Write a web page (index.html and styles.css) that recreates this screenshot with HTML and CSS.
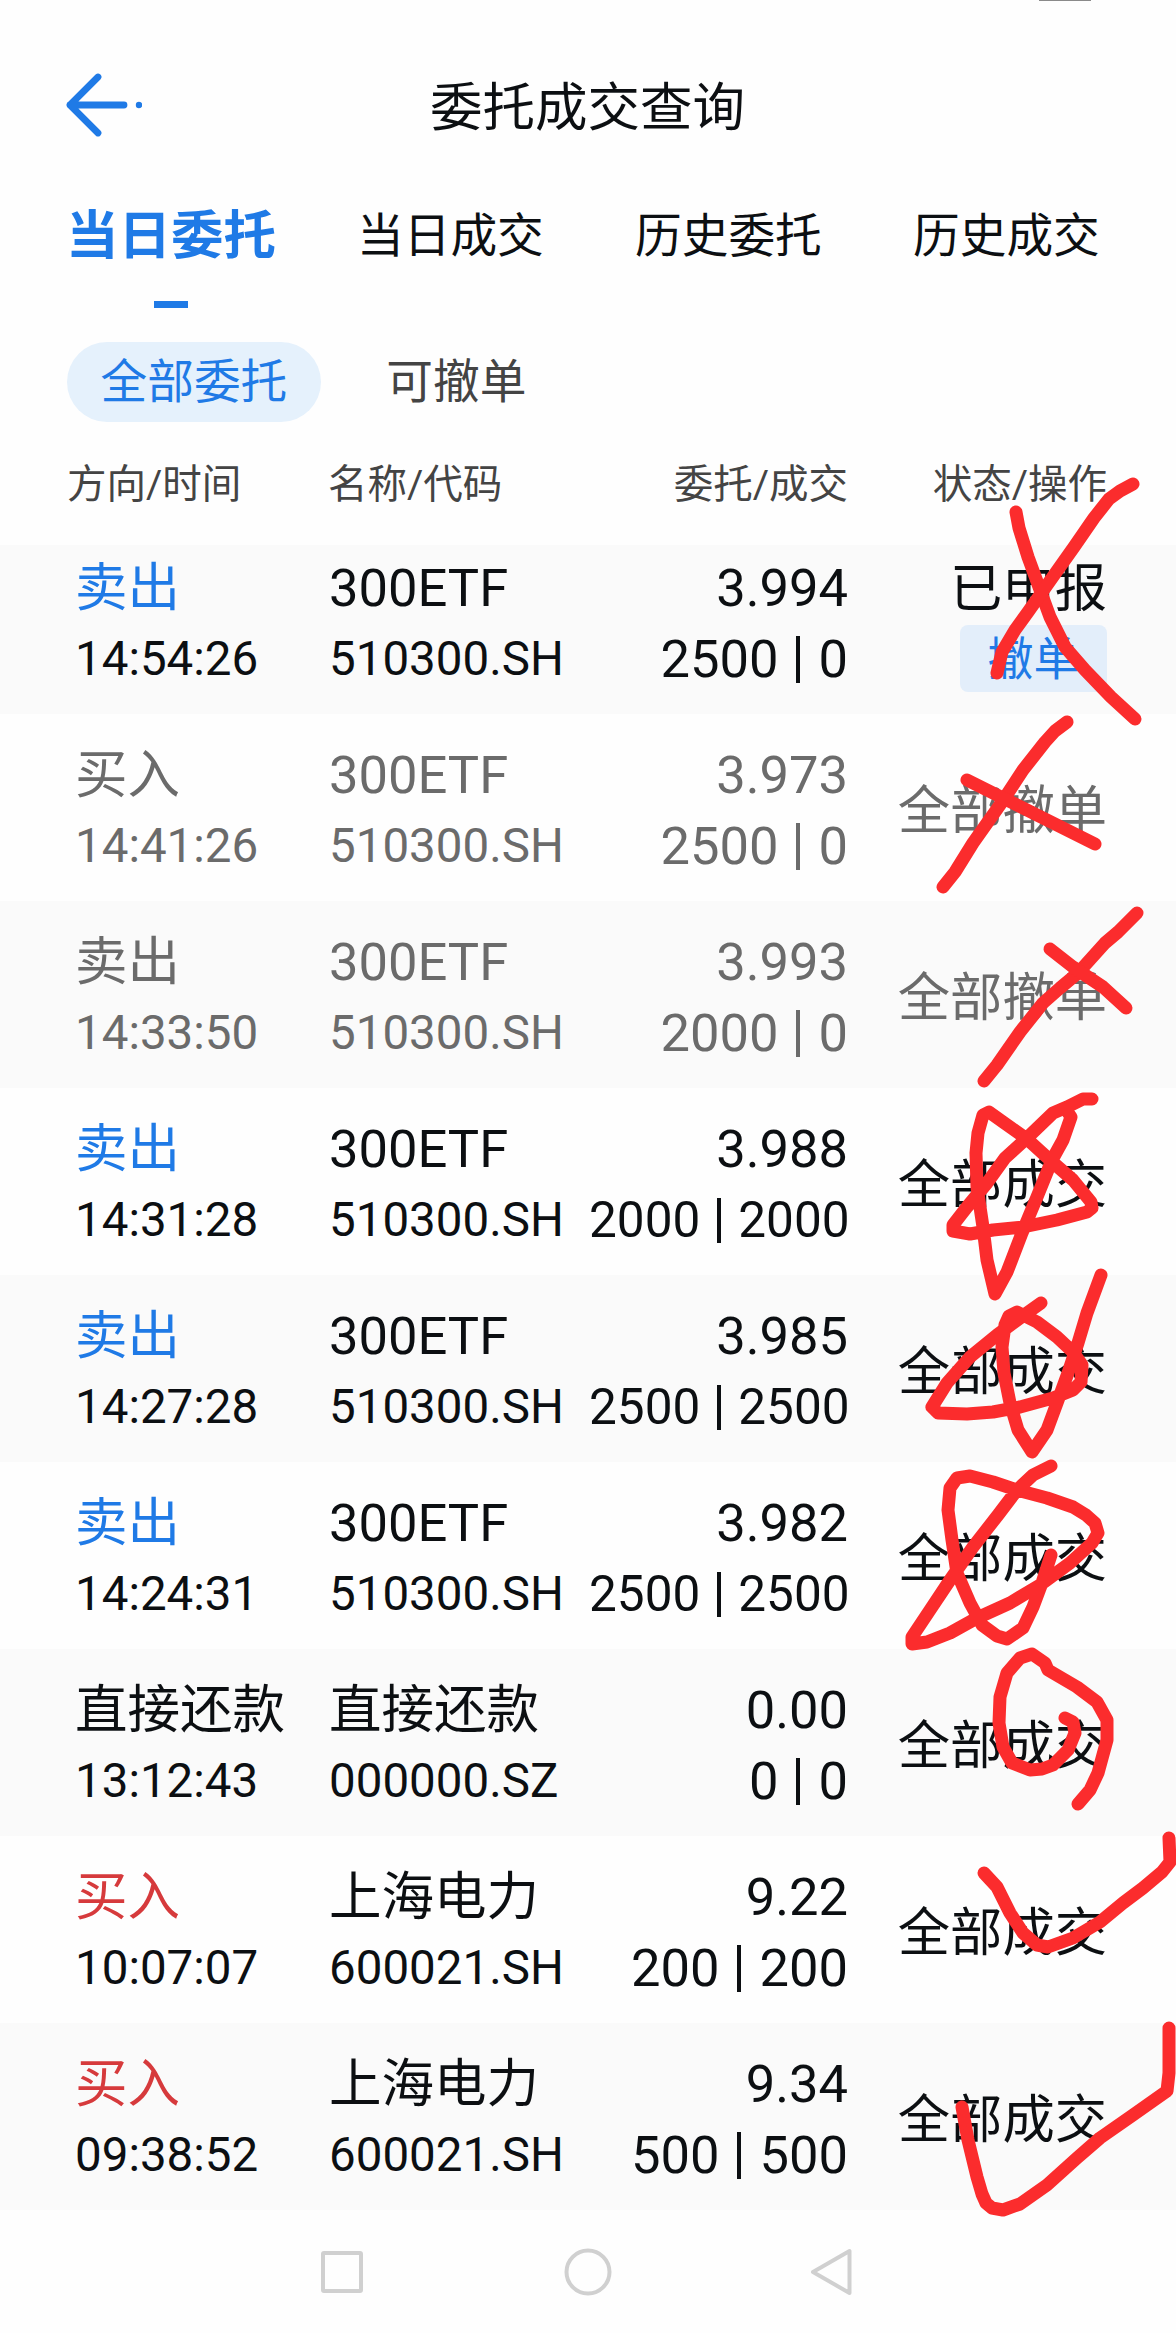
FILE: index.html
```html
<!DOCTYPE html>
<html lang="zh-CN">
<head>
    <meta charset="UTF-8">
    <meta name="viewport" content="width=device-width, initial-scale=1.0">
    <title>委托成交查询</title>
    <link rel="stylesheet" href="styles.css">
</head>
<body>
    <div class="page">
        <div class="notch"></div>
        <header class="topbar">
            <svg class="back" width="80" height="68" viewBox="0 0 80 68">
                <path d="M36 6 L8 34 L36 62 M8 34 H62"/>
                <circle cx="77" cy="34" r="3.2"/>
            </svg>
            <h1>委托成交查询</h1>
        </header>

        <nav class="tabs">
            <a class="tab active">当日委托</a>
            <a class="tab">当日成交</a>
            <a class="tab">历史委托</a>
            <a class="tab">历史成交</a>
        </nav>

        <div class="filters">
            <span class="filter selected">全部委托</span>
            <span class="filter">可撤单</span>
        </div>

        <div class="list-head">
            <span>方向/时间</span>
            <span>名称/代码</span>
            <span class="right">委托/成交</span>
            <span class="right">状态/操作</span>
        </div>

        <div class="list">
            <div class="row first">
                <div class="cell"><b class="sell">卖出</b><i>14:54:26</i></div>
                <div class="cell"><b>300ETF</b><i>510300.SH</i></div>
                <div class="cell right"><b>3.994</b><i class="big">2500<u></u>0</i></div>
                <div class="status"><span>已申报</span><button>撤单</button></div>
            </div>
            <div class="row cancelled">
                <div class="cell"><b>买入</b><i>14:41:26</i></div>
                <div class="cell"><b>300ETF</b><i>510300.SH</i></div>
                <div class="cell right"><b>3.973</b><i class="big">2500<u></u>0</i></div>
                <div class="status">全部撤单</div>
            </div>
            <div class="row cancelled">
                <div class="cell"><b>卖出</b><i>14:33:50</i></div>
                <div class="cell"><b>300ETF</b><i>510300.SH</i></div>
                <div class="cell right"><b>3.993</b><i class="big">2000<u></u>0</i></div>
                <div class="status">全部撤单</div>
            </div>
            <div class="row">
                <div class="cell"><b class="sell">卖出</b><i>14:31:28</i></div>
                <div class="cell"><b>300ETF</b><i>510300.SH</i></div>
                <div class="cell right"><b>3.988</b><i class="fit">2000<u></u>2000</i></div>
                <div class="status">全部成交</div>
            </div>
            <div class="row">
                <div class="cell"><b class="sell">卖出</b><i>14:27:28</i></div>
                <div class="cell"><b>300ETF</b><i>510300.SH</i></div>
                <div class="cell right"><b>3.985</b><i class="fit">2500<u></u>2500</i></div>
                <div class="status">全部成交</div>
            </div>
            <div class="row">
                <div class="cell"><b class="sell">卖出</b><i>14:24:31</i></div>
                <div class="cell"><b>300ETF</b><i>510300.SH</i></div>
                <div class="cell right"><b>3.982</b><i class="fit">2500<u></u>2500</i></div>
                <div class="status">全部成交</div>
            </div>
            <div class="row">
                <div class="cell"><b>直接还款</b><i>13:12:43</i></div>
                <div class="cell"><b>直接还款</b><i>000000.SZ</i></div>
                <div class="cell right"><b>0.00</b><i class="big">0<u></u>0</i></div>
                <div class="status">全部成交</div>
            </div>
            <div class="row">
                <div class="cell"><b class="buy">买入</b><i>10:07:07</i></div>
                <div class="cell"><b>上海电力</b><i>600021.SH</i></div>
                <div class="cell right"><b>9.22</b><i class="big">200<u></u>200</i></div>
                <div class="status">全部成交</div>
            </div>
            <div class="row">
                <div class="cell"><b class="buy">买入</b><i>09:38:52</i></div>
                <div class="cell"><b>上海电力</b><i>600021.SH</i></div>
                <div class="cell right"><b>9.34</b><i class="big">500<u></u>500</i></div>
                <div class="status">全部成交</div>
            </div>
        </div>

        <footer class="navbar">
            <svg width="48" height="48" viewBox="0 0 48 48"><rect x="5" y="5" width="38" height="38" rx="1"/></svg>
            <svg width="48" height="48" viewBox="0 0 48 48"><circle cx="24" cy="24" r="21.5"/></svg>
            <svg width="48" height="48" viewBox="0 0 48 48"><path d="M39.5 3 V45 L3 24 Z"/></svg>
        </footer>

        <!-- 手写标记 -->
        <svg class="marks" width="1176" height="2333" viewBox="0 0 1176 2333">
            <polyline points="1016,512 1019,528 1028,557 1039,587 1050,617 1065,647 1085,670 1111,697 1135,719"/>
            <polyline points="1133,484 1120,491 1109,499 1094,518 1074,547 1052,578 1028,612 1015,630 1002,652 997,673"/>

            <polyline points="1067,722 1055,731 1045,742 1023,770 1002,802 973,843 955,872 943,887"/>
            <polyline points="967,780 1003,798 1047,820 1095,844"/>

            <polyline points="1137,913 1118,932 1105,943 1078,973 1060,988 1043,1003 1020,1032 997,1065 984,1081"/>
            <polyline points="1050,949 1073,967 1103,987 1126,1008"/>

            <polyline points="1092,1099 1083,1099 1067,1107 1053,1113 1027,1138 1005,1158 987,1183 967,1207 953,1225 953,1231 970,1234 993,1230 1023,1227 1057,1220 1087,1212 1092,1208 1091,1202 1073,1180 1050,1160 1027,1139 1003,1122 989,1112 983,1115 978,1133 976,1153 977,1187 983,1227 987,1260 995,1294 1007,1272 1022,1233 1037,1197 1052,1160 1063,1140 1071,1117 1067,1111"/>

            <polyline points="1101,1275 1087,1313 1078,1343 1068,1373 1057,1403 1047,1430 1032,1452 1018,1430 1010,1403 1004,1373 1002,1347 1005,1325 1009,1316 1017,1312 1037,1322 1057,1337 1073,1352 1082,1365 1081,1382 1073,1390 1053,1398 1020,1407 993,1412 967,1414 938,1413 932,1407 947,1383 970,1357 997,1335 1020,1318 1041,1303"/>

            <polyline points="1051,1466 1033,1475 1017,1490 998,1515 973,1547 950,1580 930,1610 912,1637 912,1644 927,1642 950,1633 977,1618 1010,1603 1040,1585 1070,1563 1092,1543 1098,1533 1095,1523 1086,1515 1073,1507 1047,1498 1017,1490 993,1482 970,1476 957,1478 950,1488 948,1510 952,1540 957,1573 970,1603 982,1625 997,1636 1007,1639 1023,1628 1033,1607 1042,1583 1051,1555"/>

            <polyline points="1065,1718 1073,1722 1075,1733 1068,1750 1053,1765 1042,1769 1030,1770 1012,1763 1003,1747 999,1723 1000,1697 1007,1673 1020,1658 1032,1654 1045,1663 1048,1670 1077,1687 1097,1702 1107,1720 1107,1740 1098,1773 1090,1790 1078,1804"/>

            <polyline points="984,1873 997,1887 1010,1913 1023,1933 1037,1945 1048,1947 1073,1938 1100,1922 1123,1903 1143,1888 1162,1872 1170,1862 1169,1838"/>

            <polyline points="962,2107 968,2140 977,2177 982,2194 986,2203 992,2208 1003,2210 1020,2204 1047,2185 1077,2158 1100,2138 1133,2115 1167,2091 1169,2073 1169,2028"/>
        </svg>
    </div>
</body>
</html>
```

FILE: styles.css
```css
* {
    box-sizing: border-box;
}
body {
    margin: 0;
    background-color: #fefefe;
    color: #0c0f12;
    font-family: Roboto, "Noto Sans CJK SC", sans-serif;
}
.page {
    position: relative;
    width: 1176px;
    height: 2333px;
    overflow: hidden;
}
.notch {
    width: 52px;
    height: 1px;
    margin-left: 1039px;
    background-color: #8a8a8a;
}
.topbar {
    display: grid;
    grid-template-columns: 1fr auto 1fr;
    align-items: center;
    height: 170px;
    padding: 38px 63px 0 62px;
}
.back {
    fill: none;
    stroke: #1f7ae6;
    stroke-width: 6.8;
    stroke-linecap: round;
    stroke-linejoin: round;
}
.back circle {
    fill: #1f7ae6;
    stroke: none;
}
h1 {
    margin: 0;
    padding-top: 5px;
    font-size: 52.5px;
    font-weight: 400;
    line-height: 76px;
}
.tabs {
    display: grid;
    grid-template-columns: 291px 278px 278px 1fr;
    height: 171px;
    padding: 29px 0 0 66px;
}
.tab {
    font-size: 46.7px;
    line-height: 72px;
}
.tab.active {
    justify-self: start;
    color: #1f7ae6;
    font-size: 52.5px;
    font-weight: 700;
}
.tab.active::after {
    content: "";
    display: block;
    width: 34px;
    height: 7px;
    margin: 29px auto 0;
    background-color: #1f7ae6;
}
.filters {
    display: flex;
    gap: 32px;
    height: 80px;
    padding-left: 67px;
}
.filter {
    padding: 0 33.5px;
    font-size: 46.7px;
    line-height: 81px;
    color: #444;
}
.filter.selected {
    border-radius: 40px;
    background-color: #e5f1fc;
    color: #1f7ae6;
}
.list-head {
    display: grid;
    grid-template-columns: 261px 261px 259px 259px;
    height: 123px;
    padding: 33px 0 0 67px;
    font-size: 39.5px;
    line-height: 60px;
    color: #444;
}
.right {
    text-align: right;
}
.row {
    display: grid;
    grid-template-columns: 254px 260px 259px 259px;
    height: 187px;
    padding: 26px 0 0 75px;
}
.row:nth-child(odd) {
    background-color: #fafafa;
}
.row.first {
    height: 169px;
    padding-top: 8px;
}
.row.cancelled {
    color: #6b6b6b;
}
.cell {
    white-space: nowrap;
}
.cell b,
.cell i {
    display: block;
    font-style: normal;
    font-weight: 400;
}
.cell b {
    font-size: 52.5px;
    line-height: 70px;
}
.cell i {
    font-size: 47.5px;
    line-height: 72px;
}
.cell i.big {
    font-size: 52.5px;
}
.cell i.fit {
    font-size: 49.5px;
}
/* divider between ordered and filled amounts */
.cell u {
    display: inline-block;
    width: 4px;
    height: 47px;
    margin: 0 18px;
    vertical-align: -6px;
    background-color: currentColor;
}
.fit u {
    height: 45px;
    margin: 0 17px;
}
.sell {
    color: #1f7ae6;
}
.buy {
    color: #d63a3c;
}
.status {
    padding-top: 33px;
    font-size: 52.3px;
    line-height: 76px;
    text-align: right;
}
.first .status {
    display: flex;
    flex-direction: column;
    align-items: flex-end;
    padding-top: 0;
    line-height: 72px;
}
.status button {
    width: 147px;
    height: 67px;
    margin: 0;
    padding: 0;
    border: none;
    border-radius: 8px;
    background-color: #e3eefa;
    color: #1f7ae6;
    font-family: inherit;
    font-size: 46px;
    line-height: 66px;
}
.navbar {
    display: flex;
    justify-content: center;
    gap: 198px;
    padding-top: 38px;
}
.navbar svg {
    fill: none;
    stroke: #d0d0d0;
    stroke-width: 4;
    stroke-linejoin: round;
}
.marks {
    position: absolute;
    top: 0;
    left: 0;
    fill: none;
    stroke: #fb2c2d;
    stroke-width: 13;
    stroke-linecap: round;
    stroke-linejoin: round;
    pointer-events: none;
}
```
